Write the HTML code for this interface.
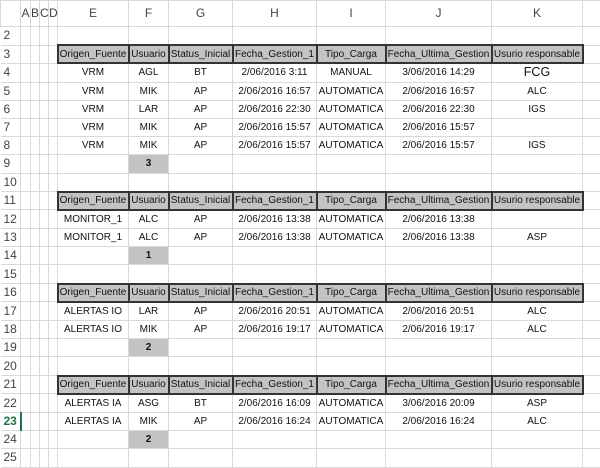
<!DOCTYPE html>
<html><head><meta charset="utf-8"><style>
body{margin:0;width:600px;height:448px;overflow:hidden;background:#fff;font-family:"Liberation Sans",Arial,sans-serif;}
table{border-collapse:collapse;table-layout:fixed;position:absolute;left:0;top:0;width:600px;}
td{border:1px solid #d9d9d9;padding:0;font-size:10px;color:#111;text-align:center;white-space:nowrap;overflow:hidden;height:17.2px;line-height:15px;}
tr.ch td{height:25px;color:#444;font-size:12px;border-color:#d9d9d9;}
td.rh{color:#444;font-size:12px;text-align:left;padding-left:3px;border-left:none;}
td.h{background:#c3c3c3;border:2px solid #333;height:16.1px;}
td.c{background:#c3c3c3;font-weight:bold;}
td.big{font-size:12.5px;}
td.sel{color:#217346;font-weight:bold;border-right:2px solid #217346;}
</style></head><body>
<table>
<colgroup><col style="width:20px"><col style="width:10px"><col style="width:9px"><col style="width:9px"><col style="width:9px"><col style="width:71px"><col style="width:40px"><col style="width:64px"><col style="width:84px"><col style="width:69px"><col style="width:106px"><col style="width:91px"><col style="width:18px"></colgroup>
<tr class="ch"><td></td><td>A</td><td>B</td><td>C</td><td>D</td><td>E</td><td>F</td><td>G</td><td>H</td><td>I</td><td>J</td><td>K</td><td></td></tr>
<tr><td class="rh">2</td><td></td><td></td><td></td><td></td><td></td><td></td><td></td><td></td><td></td><td></td><td></td><td></td></tr>
<tr><td class="rh">3</td><td></td><td></td><td></td><td></td><td class="h">Origen_Fuente</td><td class="h">Usuario</td><td class="h">Status_Inicial</td><td class="h">Fecha_Gestion_1</td><td class="h">Tipo_Carga</td><td class="h">Fecha_Ultima_Gestion</td><td class="h">Usurio responsable</td><td></td></tr>
<tr><td class="rh">4</td><td></td><td></td><td></td><td></td><td>VRM</td><td>AGL</td><td>BT</td><td>2/06/2016 3:11</td><td>MANUAL</td><td>3/06/2016 14:29</td><td class="big">FCG</td><td></td></tr>
<tr><td class="rh">5</td><td></td><td></td><td></td><td></td><td>VRM</td><td>MIK</td><td>AP</td><td>2/06/2016 16:57</td><td>AUTOMATICA</td><td>2/06/2016 16:57</td><td>ALC</td><td></td></tr>
<tr><td class="rh">6</td><td></td><td></td><td></td><td></td><td>VRM</td><td>LAR</td><td>AP</td><td>2/06/2016 22:30</td><td>AUTOMATICA</td><td>2/06/2016 22:30</td><td>IGS</td><td></td></tr>
<tr><td class="rh">7</td><td></td><td></td><td></td><td></td><td>VRM</td><td>MIK</td><td>AP</td><td>2/06/2016 15:57</td><td>AUTOMATICA</td><td>2/06/2016 15:57</td><td></td><td></td></tr>
<tr><td class="rh">8</td><td></td><td></td><td></td><td></td><td>VRM</td><td>MIK</td><td>AP</td><td>2/06/2016 15:57</td><td>AUTOMATICA</td><td>2/06/2016 15:57</td><td>IGS</td><td></td></tr>
<tr><td class="rh">9</td><td></td><td></td><td></td><td></td><td></td><td class="c">3</td><td></td><td></td><td></td><td></td><td></td><td></td></tr>
<tr><td class="rh">10</td><td></td><td></td><td></td><td></td><td></td><td></td><td></td><td></td><td></td><td></td><td></td><td></td></tr>
<tr><td class="rh">11</td><td></td><td></td><td></td><td></td><td class="h">Origen_Fuente</td><td class="h">Usuario</td><td class="h">Status_Inicial</td><td class="h">Fecha_Gestion_1</td><td class="h">Tipo_Carga</td><td class="h">Fecha_Ultima_Gestion</td><td class="h">Usurio responsable</td><td></td></tr>
<tr><td class="rh">12</td><td></td><td></td><td></td><td></td><td>MONITOR_1</td><td>ALC</td><td>AP</td><td>2/06/2016 13:38</td><td>AUTOMATICA</td><td>2/06/2016 13:38</td><td></td><td></td></tr>
<tr><td class="rh">13</td><td></td><td></td><td></td><td></td><td>MONITOR_1</td><td>ALC</td><td>AP</td><td>2/06/2016 13:38</td><td>AUTOMATICA</td><td>2/06/2016 13:38</td><td>ASP</td><td></td></tr>
<tr><td class="rh">14</td><td></td><td></td><td></td><td></td><td></td><td class="c">1</td><td></td><td></td><td></td><td></td><td></td><td></td></tr>
<tr><td class="rh">15</td><td></td><td></td><td></td><td></td><td></td><td></td><td></td><td></td><td></td><td></td><td></td><td></td></tr>
<tr><td class="rh">16</td><td></td><td></td><td></td><td></td><td class="h">Origen_Fuente</td><td class="h">Usuario</td><td class="h">Status_Inicial</td><td class="h">Fecha_Gestion_1</td><td class="h">Tipo_Carga</td><td class="h">Fecha_Ultima_Gestion</td><td class="h">Usurio responsable</td><td></td></tr>
<tr><td class="rh">17</td><td></td><td></td><td></td><td></td><td>ALERTAS IO</td><td>LAR</td><td>AP</td><td>2/06/2016 20:51</td><td>AUTOMATICA</td><td>2/06/2016 20:51</td><td>ALC</td><td></td></tr>
<tr><td class="rh">18</td><td></td><td></td><td></td><td></td><td>ALERTAS IO</td><td>MIK</td><td>AP</td><td>2/06/2016 19:17</td><td>AUTOMATICA</td><td>2/06/2016 19:17</td><td>ALC</td><td></td></tr>
<tr><td class="rh">19</td><td></td><td></td><td></td><td></td><td></td><td class="c">2</td><td></td><td></td><td></td><td></td><td></td><td></td></tr>
<tr><td class="rh">20</td><td></td><td></td><td></td><td></td><td></td><td></td><td></td><td></td><td></td><td></td><td></td><td></td></tr>
<tr><td class="rh">21</td><td></td><td></td><td></td><td></td><td class="h">Origen_Fuente</td><td class="h">Usuario</td><td class="h">Status_Inicial</td><td class="h">Fecha_Gestion_1</td><td class="h">Tipo_Carga</td><td class="h">Fecha_Ultima_Gestion</td><td class="h">Usurio responsable</td><td></td></tr>
<tr><td class="rh">22</td><td></td><td></td><td></td><td></td><td>ALERTAS IA</td><td>ASG</td><td>BT</td><td>2/06/2016 16:09</td><td>AUTOMATICA</td><td>3/06/2016 20:09</td><td>ASP</td><td></td></tr>
<tr><td class="rh sel">23</td><td></td><td></td><td></td><td></td><td>ALERTAS IA</td><td>MIK</td><td>AP</td><td>2/06/2016 16:24</td><td>AUTOMATICA</td><td>2/06/2016 16:24</td><td>ALC</td><td></td></tr>
<tr><td class="rh">24</td><td></td><td></td><td></td><td></td><td></td><td class="c">2</td><td></td><td></td><td></td><td></td><td></td><td></td></tr>
<tr><td class="rh">25</td><td></td><td></td><td></td><td></td><td></td><td></td><td></td><td></td><td></td><td></td><td></td><td></td></tr>
</table>
</body></html>
